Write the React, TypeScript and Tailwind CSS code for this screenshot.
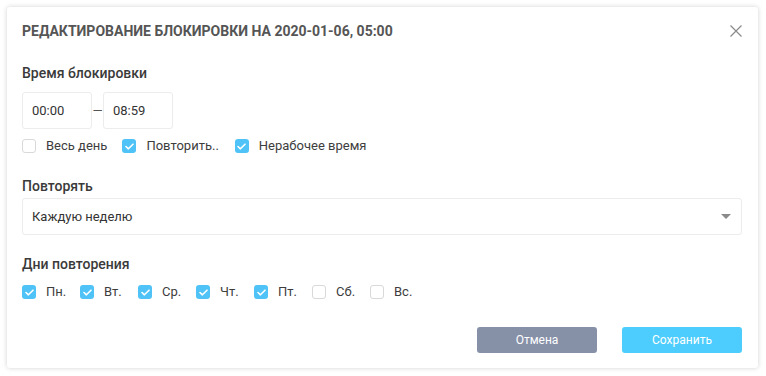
import React from 'react';

const Check: React.FC<{ checked?: boolean; label: string }> = ({ checked, label }) => (
    <label className="flex items-center gap-[10px] text-[13px] text-[#3d3d3d]">
        {checked ? (
            <span className="w-[14px] h-[14px] rounded-[3px] bg-[#4fc3f7] flex items-center justify-center">
                <svg width="9" height="7" viewBox="0 0 9 7" fill="none">
                    <path d="M1 3.5 L3.4 5.8 L8 1.2" stroke="white" strokeWidth="1.6" strokeLinecap="round" strokeLinejoin="round" />
                </svg>
            </span>
        ) : (
            <span className="w-[14px] h-[14px] rounded-[3px] border border-[#d9d9d9] bg-white"></span>
        )}
        <span>{label}</span>
    </label>
);

const days: [string, boolean][] = [
    ['Пн.', true],
    ['Вт.', true],
    ['Ср.', true],
    ['Чт.', true],
    ['Пт.', true],
    ['Сб.', false],
    ['Вс.', false],
];

export default function App() {
    return (
        <div className="w-[766px] h-[376px] bg-white p-[7px] font-['Roboto',sans-serif]">
            <div className="w-[751px] h-[361px] bg-white rounded-[3px] shadow-[0_0_5px_rgba(0,0,0,0.18)] px-[15px] pt-[14px]">
                {/* Header */}
                <div className="flex justify-between items-center h-[20px]">
                    <h3 className="text-[14px] font-bold text-[#555555] uppercase">
                        Редактирование блокировки на 2020-01-06, 05:00
                    </h3>
                    <svg width="12" height="12" viewBox="0 0 12 12" className="mr-[1px]">
                        <path d="M0.5 0.5 L11.5 11.5 M11.5 0.5 L0.5 11.5" stroke="#8a8a8a" strokeWidth="1.2" />
                    </svg>
                </div>

                {/* Time */}
                <div className="mt-[22px] text-[14px] font-medium text-[#3a3a3a] leading-[20px]">Время блокировки</div>
                <div className="mt-[9px] flex items-center">
                    <div className="w-[70px] h-[37px] border border-[#ececec] rounded-[3px] flex items-center pl-[9px] text-[13px] text-[#333]">00:00</div>
                    <span className="w-[11px] text-center text-[#555] text-[13px]">—</span>
                    <div className="w-[70px] h-[37px] border border-[#ececec] rounded-[3px] flex items-center pl-[9px] text-[13px] text-[#333]">08:59</div>
                </div>
                <div className="mt-[9px] flex items-center h-[16px]">
                    <Check label="Весь день" />
                    <div className="ml-[15px]"><Check checked label="Повторить.." /></div>
                    <div className="ml-[16px]"><Check checked label="Нерабочее время" /></div>
                </div>

                {/* Repeat */}
                <div className="mt-[22px] text-[14px] font-medium text-[#3a3a3a] leading-[20px]">Повторять</div>
                <div className="mt-[2px] w-[720px] h-[37px] border border-[#ececec] rounded-[3px] flex items-center justify-between pl-[9px] pr-[10px] text-[13px] text-[#333]">
                    <span>Каждую неделю</span>
                    <svg width="10" height="5" viewBox="0 0 10 5">
                        <path d="M0 0 L10 0 L5 5 Z" fill="#8a8a8a" />
                    </svg>
                </div>

                {/* Days */}
                <div className="mt-[19px] text-[14px] font-medium text-[#3a3a3a] leading-[20px]">Дни повторения</div>
                <div className="mt-[10px] flex items-center h-[16px]">
                    {days.map(([d, c]) => (
                        <div key={d} className="w-[58px]">
                            <Check checked={c} label={d} />
                        </div>
                    ))}
                </div>

                {/* Footer */}
                <div className="mt-[27px] flex justify-end gap-[25px] pr-[1px]">
                    <button className="w-[120px] h-[26px] rounded-[3px] bg-[#8690a7] text-white text-[12px]">Отмена</button>
                    <button className="w-[120px] h-[26px] rounded-[3px] bg-[#4dcdfd] text-white text-[12px]">Сохранить</button>
                </div>
            </div>
        </div>
    );
}
